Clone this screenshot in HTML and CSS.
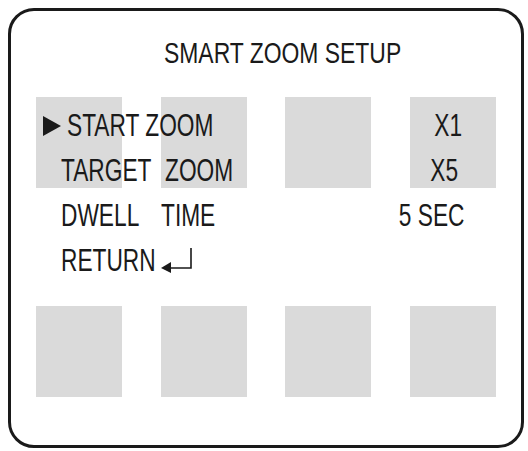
FILE: index.html
```html
<!DOCTYPE html>
<html lang="en">
<head>
    <meta charset="UTF-8">
    <title>Smart Zoom Setup</title>
    <link rel="stylesheet" href="styles.css">
</head>
<body>
    <div class="screen">
        <!-- background tiles of the OSD -->
        <div class="tiles">
            <div class="tile"></div>
            <div class="tile"></div>
            <div class="tile"></div>
            <div class="tile"></div>
            <div class="tile"></div>
            <div class="tile"></div>
            <div class="tile"></div>
            <div class="tile"></div>
        </div>

        <div class="menu">
            <h1 class="title"><span class="text">SMART ZOOM SETUP</span></h1>

            <div class="row">
                <span class="label wide">
                    <svg class="cursor" width="18" height="20" viewBox="0 0 18 20"><path d="M0 0 L18 10 L0 20 Z" fill="#1a1a1a"/></svg>
                    <span class="text">START ZOOM</span>
                </span>
                <span class="value value-x1"><span class="text">X1</span></span>
            </div>
            <div class="row">
                <span class="label"><span class="text">TARGET</span></span>
                <span class="label"><span class="text">ZOOM</span></span>
                <span class="value value-x5"><span class="text">X5</span></span>
            </div>
            <div class="row">
                <span class="label"><span class="text">DWELL</span></span>
                <span class="label second"><span class="text">TIME</span></span>
                <span class="value"><span class="text">5 SEC</span></span>
            </div>
            <div class="row">
                <span class="label"><span class="text">RETURN</span></span>
                <svg class="enter" width="32" height="28" viewBox="0 0 32 28">
                    <path d="M30 1 V21 H9" fill="none" stroke="#1a1a1a" stroke-width="1.6"/>
                    <path d="M0 21 L10 15 L10 26 Z" fill="#1a1a1a"/>
                </svg>
            </div>
        </div>
    </div>
</body>
</html>
```

FILE: styles.css
```css
* {
    margin: 0;
    padding: 0;
    box-sizing: border-box;
}

body {
    background: #fff;
    padding: 8px 4px 3px 8px;
    font-family: 'Liberation Sans', Arial, sans-serif;
    color: #1a1a1a;
}

.screen {
    display: grid;
    width: 516px;
    height: 440px;
    border: 3px solid #1a1a1a;
    border-radius: 26px;
}

.tiles,
.menu {
    grid-area: 1 / 1;
}

.tiles {
    display: grid;
    grid-template-columns: repeat(4, 86px);
    grid-template-rows: 91px 91px;
    column-gap: 38.5px;
    row-gap: 118px;
    padding: 86px 0 0 25px;
}

.tile {
    background: #dadada;
}

.menu {
    padding: 24px 58px 0 50px;
}

/* the OSD font is a condensed sans, squeeze Liberation Sans to match */
.text {
    display: inline-block;
    white-space: nowrap;
    transform: scaleX(0.71);
    transform-origin: left center;
}

.title {
    font-size: 29px;
    font-weight: normal;
    line-height: 36px;
    padding-left: 103px;
    margin-bottom: 32px;
}

.title .text {
    transform: scaleX(0.79);
}

.row {
    display: grid;
    grid-template-columns: 104px auto 1fr;
    align-items: start;
    font-size: 32px;
    line-height: 45px;
}

.label.wide {
    grid-column: 1 / 3;
    display: flex;
    align-items: center;
}

.label.second {
    margin-left: -4px;
}

.value {
    justify-self: end;
    grid-column: 3;
}

.value .text {
    transform-origin: right center;
}

.value-x1 {
    margin-right: 2px;
}

.value-x5 {
    margin-right: 6px;
}

.cursor {
    margin-left: -18px;
    margin-right: 6px;
}

.enter {
    margin: 9px 0 0 -4px;
}
```
